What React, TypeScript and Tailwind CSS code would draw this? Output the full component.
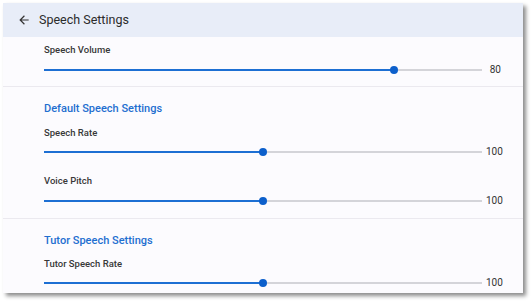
import React from "react"

const Slider = ({ value, max }: { value: number; max: number }) => {
  const pct = (value / max) * 100
  return (
    <div className="flex items-center h-[14px]">
      <div className="relative flex-1 h-[14px]">
        <div className="absolute left-0 right-0 top-[6px] h-[2px] bg-[#d4d4d9]" />
        <div className="absolute left-0 top-[6px] h-[2px] bg-[#1d6fd3]" style={{ width: `${pct}%` }} />
        <div
          className="absolute top-[3px] w-[8px] h-[8px] -ml-[4px] rounded-full bg-[#0c5fcb]"
          style={{ left: `${pct}%` }}
        />
      </div>
      <span className="ml-[4px] w-[15px] text-right text-[10px] leading-[14px] text-[#333]">{value}</span>
    </div>
  )
}

const Label = ({ children }: { children: React.ReactNode }) => (
  <p className="text-[9.5px] leading-[14px] font-medium text-[#383838]">{children}</p>
)

const Heading = ({ children }: { children: React.ReactNode }) => (
  <p className="text-[11px] leading-[16px] font-medium text-[#1f6fd0]">{children}</p>
)

export default function App() {
  return (
    <div className="w-[531px] h-[303px] bg-white font-['Roboto',sans-serif]">
      <div className="ml-[3px] pt-[3px]">
        <div className="w-[520px] h-[290px] bg-[#fcfbfe] shadow-[3px_3px_4px_rgba(0,0,0,0.45)] overflow-hidden">
          {/* Header */}
          <div className="h-[34px] bg-[#e8edf8] flex items-center pl-[14px]">
            <svg width="14" height="14" viewBox="0 0 24 24" className="text-[#333]">
              <path fill="currentColor" d="M20 11H7.83l5.59-5.59L12 4l-8 8 8 8 1.41-1.41L7.83 13H20v-2z" />
            </svg>
            <span className="ml-[8px] text-[12.5px] text-[#2b2b2b]">Speech Settings</span>
          </div>

          {/* Volume */}
          <div className="pl-[41px] pr-[22px] pt-[6px] pb-[9px] flex flex-col">
            <Label>Speech Volume</Label>
            <div className="mt-[6px]">
              <Slider value={80} max={100} />
            </div>
          </div>
          <div className="h-px bg-[#ebe9ef]" />

          {/* Default */}
          <div className="pl-[41px] pr-[22px] pt-[14px] pb-[10px] flex flex-col">
            <Heading>Default Speech Settings</Heading>
            <div className="mt-[9px]">
              <Label>Speech Rate</Label>
            </div>
            <div className="mt-[5px]">
              <Slider value={100} max={200} />
            </div>
            <div className="mt-[15px]">
              <Label>Voice Pitch</Label>
            </div>
            <div className="mt-[6px]">
              <Slider value={100} max={200} />
            </div>
          </div>
          <div className="h-px bg-[#ebe9ef]" />

          {/* Tutor */}
          <div className="pl-[41px] pr-[22px] pt-[14px] flex flex-col">
            <Heading>Tutor Speech Settings</Heading>
            <div className="mt-[8px]">
              <Label>Tutor Speech Rate</Label>
            </div>
            <div className="mt-[5px]">
              <Slider value={100} max={200} />
            </div>
          </div>
        </div>
      </div>
    </div>
  )
}
